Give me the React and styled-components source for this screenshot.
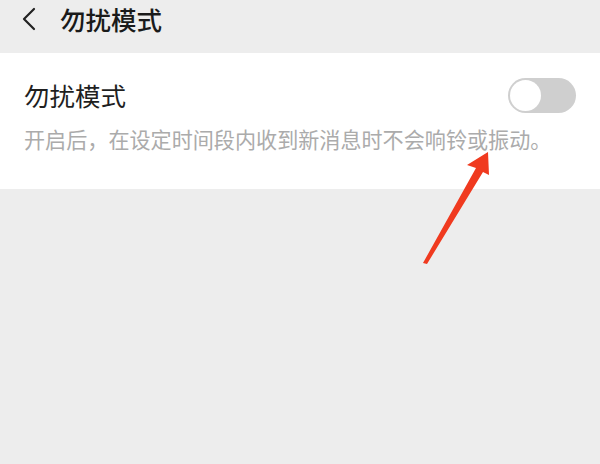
import React from "react";
import styled, { createGlobalStyle } from "styled-components";

const Global = createGlobalStyle`
  html, body { margin: 0; padding: 0; background: #ededed; }
  body { font-family: "Noto Sans CJK SC", "Noto Sans", sans-serif; }
`;

const Page = styled.div`
  position: relative;
  width: 600px;
  height: 464px;
  background: #ededed;
  overflow: hidden;
`;

const TopBar = styled.div`
  height: 53px;
  display: flex;
  align-items: center;
  padding-left: 20px;
  box-sizing: border-box;
  padding-bottom: 16px;
`;

const Back = styled.svg`
  width: 20px;
  height: 26px;
  margin-right: 20px;
`;

const TopTitle = styled.div`
  font-size: 25.5px;
  font-weight: 500;
  color: #1a1a1a;
  line-height: 1;
`;

const Card = styled.div`
  background: #fff;
  padding: 23px 24px 0 24px;
  height: 136px;
  box-sizing: border-box;
`;

const Row = styled.div`
  display: flex;
  align-items: center;
  justify-content: space-between;
`;

const Title = styled.div`
  font-size: 25.5px;
  color: #1f1f1f;
  line-height: 38px;
`;

const Switch = styled.div`
  width: 68px;
  height: 35px;
  border-radius: 18px;
  background: #cfcfcf;
  position: relative;
`;

const Knob = styled.div`
  position: absolute;
  left: 2px;
  top: 2px;
  width: 31px;
  height: 31px;
  border-radius: 50%;
  background: #fff;
`;

const Desc = styled.div`
  font-size: 21.1px;
  color: #ababab;
  line-height: 30px;
  margin-top: 10px;
  white-space: nowrap;
`;

const Arrow = styled.svg`
  position: absolute;
  left: 0;
  top: 0;
  pointer-events: none;
`;

export default function App() {
  return (
    <>
      <Global />
      <Page>
        <TopBar>
          <Back viewBox="0 0 20 26">
            <path d="M14 3 L4 13 L14 23" fill="none" stroke="#222" strokeWidth="2.2" strokeLinecap="round" strokeLinejoin="round" />
          </Back>
          <TopTitle>勿扰模式</TopTitle>
        </TopBar>
        <Card>
          <Row>
            <Title>勿扰模式</Title>
            <Switch>
              <Knob />
            </Switch>
          </Row>
          <Desc>开启后，在设定时间段内收到新消息时不会响铃或振动。</Desc>
        </Card>
        <Arrow width="600" height="464" viewBox="0 0 600 464">
          <polygon points="423,263 427,264 483,172 489,175 488,152 467,165 476,168" fill="#f03a1f" strokeLinejoin="round" />
        </Arrow>
      </Page>
    </>
  );
}
